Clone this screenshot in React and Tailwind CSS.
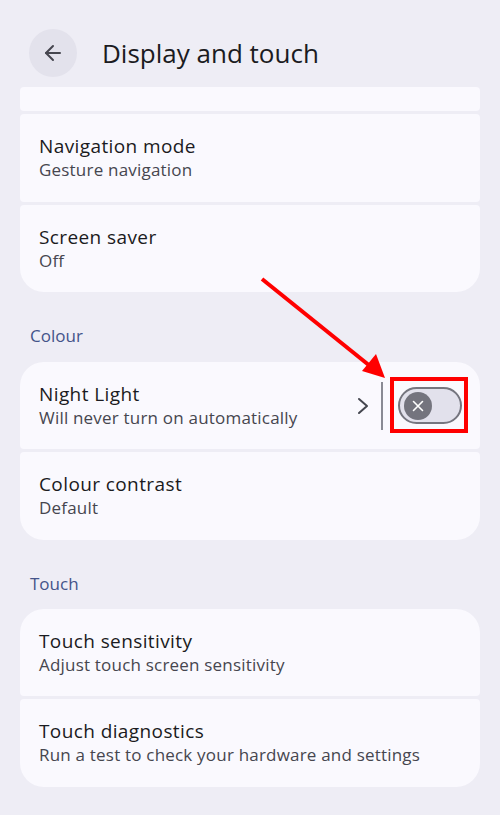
import { ArrowLeft } from 'lucide-react';

const font = { fontFamily: '"Open Sans", "Noto Sans", sans-serif' };

// Single settings row inside a grouped card
function Row({ title, subtitle, className = '', children }) {
    return (
        <div className={`flex items-center bg-[#faf9fe] pl-[19px] pr-[18px] ${className}`}>
            <div className="flex flex-1 flex-col">
                <span className="text-[19px] leading-6 tracking-[0.4px] text-[#1b1b21]">{title}</span>
                <span className="text-[17px] leading-6 tracking-[0.2px] text-[#46464f]">{subtitle}</span>
            </div>
            {children}
        </div>
    );
}

function SectionLabel({ text }) {
    return (
        <div className="px-[10px] pt-[32px] pb-[14px] text-[17px] leading-6 text-[#44548a]">
            {text}
        </div>
    );
}

export default function App() {
    return (
        <div className="relative min-h-[815px] w-[500px] overflow-hidden bg-[#eeedf5]" style={font}>
            {/* Top bar */}
            <div className="flex items-center gap-[25px] pl-[29px] pt-[29px]">
                <button className="flex h-[48px] w-[48px] items-center justify-center rounded-full bg-[#e3e2ec] text-[#46464f]">
                    <ArrowLeft size={24} strokeWidth={2} />
                </button>
                <h1 className="text-[26px] leading-8 text-[#1b1b21]">Display and touch</h1>
            </div>

            <div className="px-[20px] pt-[10px]">
                {/* Display group, scrolled */}
                <div className="flex flex-col gap-[3px]">
                    <div className="h-[24px] rounded-[4px] bg-[#faf9fe]" />
                    <Row
                        title="Navigation mode"
                        subtitle="Gesture navigation"
                        className="h-[88px] rounded-[4px]"
                    />
                    <Row
                        title="Screen saver"
                        subtitle="Off"
                        className="h-[87px] rounded-t-[4px] rounded-b-[24px]"
                    />
                </div>

                <SectionLabel text="Colour" />
                <div className="flex flex-col gap-[3px]">
                    <Row
                        title="Night Light"
                        subtitle="Will never turn on automatically"
                        className="h-[87px] rounded-t-[24px] rounded-b-[4px]"
                    >
                        <svg width="14" height="20" viewBox="0 0 14 20" className="mr-[12px]">
                            <path
                                d="M4 3 L12 10 L4 17"
                                fill="none"
                                stroke="#44464f"
                                strokeWidth="2"
                                strokeLinecap="round"
                                strokeLinejoin="round"
                            />
                        </svg>
                        <div className="h-[48px] w-[2px] bg-[#8a8a94]" />
                        <div className="ml-[15px] flex h-[37px] w-[64px] items-center rounded-full border-2 border-[#75757f] bg-[#e2e1ec] pl-[4px]">
                            <div className="flex h-[28px] w-[28px] items-center justify-center rounded-full bg-[#74747e]">
                                <svg width="12" height="12" viewBox="0 0 12 12">
                                    <path
                                        d="M1.5 1.5 L10.5 10.5 M10.5 1.5 L1.5 10.5"
                                        stroke="#fff"
                                        strokeWidth="1.6"
                                        strokeLinecap="round"
                                    />
                                </svg>
                            </div>
                        </div>
                    </Row>
                    <Row
                        title="Colour contrast"
                        subtitle="Default"
                        className="h-[88px] rounded-t-[4px] rounded-b-[24px]"
                    />
                </div>

                <SectionLabel text="Touch" />
                <div className="-mt-px flex flex-col gap-[3px]">
                    <Row
                        title="Touch sensitivity"
                        subtitle="Adjust touch screen sensitivity"
                        className="h-[87px] rounded-t-[24px] rounded-b-[4px]"
                    />
                    <Row
                        title="Touch diagnostics"
                        subtitle="Run a test to check your hardware and settings"
                        className="h-[88px] rounded-t-[4px] rounded-b-[24px]"
                    />
                </div>
            </div>

            {/* Annotation: arrow pointing at the switch */}
            <svg
                className="pointer-events-none absolute left-0 top-0"
                width="500"
                height="815"
                viewBox="0 0 500 815"
            >
                <line x1="262" y1="279" x2="370" y2="366" stroke="#ff0000" strokeWidth="4" />
                <polygon points="385,378 362,371 376,354" fill="#ff0000" />
                <rect
                    x="392"
                    y="379"
                    width="74"
                    height="52"
                    fill="none"
                    stroke="#ff0000"
                    strokeWidth="4"
                />
            </svg>
        </div>
    );
}
